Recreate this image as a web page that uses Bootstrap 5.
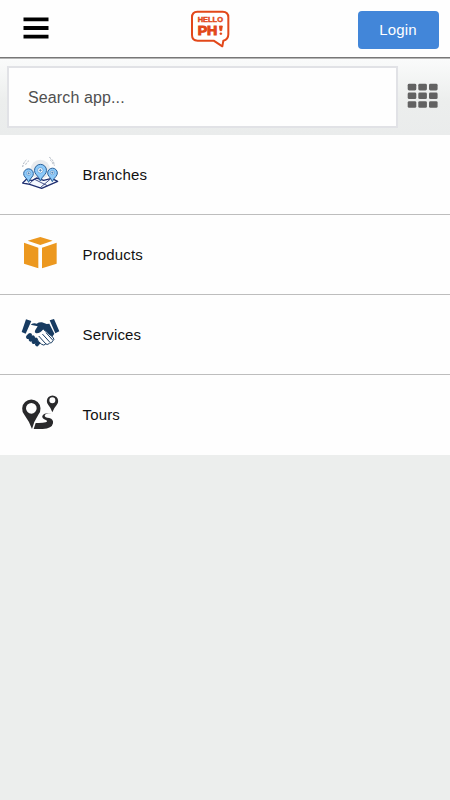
<!DOCTYPE html>
<html lang="en">
<head>
<meta charset="utf-8">
<meta name="viewport" content="width=device-width, initial-scale=1">
<title>Hello PH!</title>
<link href="https://cdn.jsdelivr.net/npm/bootstrap@5.3.0/dist/css/bootstrap.min.css" rel="stylesheet">
<style>
body{background:#eceeed;font-family:"Liberation Sans",Arial,sans-serif;font-size:15px;letter-spacing:.15px;color:#111}
.topbar{height:59px;background:#fefefe;border-bottom:1px solid #b5b5b5;box-shadow:inset 0 -1px #777}
.menu-btn{width:26px;height:22px;margin:17px 0 0 23px}
.logo{width:60px;height:58px;margin-left:131px}
.login-btn{width:81px;height:37.5px;margin:11px 0 0 117.5px;background:#4286d9;border-radius:4px;font-size:15px;line-height:37px;letter-spacing:.2px}
.search-row{height:76px;padding:7px 0 7px 7px;background:linear-gradient(#fafbfb,#eceeed 55%,#eaecec)}
.search-box{width:391px;height:62px;border:2px solid #e1e2e6;border-radius:0;padding:1px 19px 0;font-size:16px;letter-spacing:.12px;background:#fefefe;color:#444}
.search-box::placeholder{color:#505050;opacity:1}
.search-box:focus{box-shadow:none;border-color:#c5cad3}
.grid-btn{width:32px;height:26px;margin:17px 0 0 9px}
.app-row{height:80px;background:#fefefe;border-bottom:1px solid #bdbdbd;color:#111}
.app-row:last-child{border-bottom-color:transparent}
.app-row svg{width:60px;height:55px;margin:10px 12.5px 0 10px}
.app-row span{padding-top:2px}
</style>
<script src="https://cdn.jsdelivr.net/npm/bootstrap@5.3.0/dist/js/bootstrap.bundle.min.js"></script>
</head>
<body>
<header class="topbar d-flex align-items-start">
  <button class="menu-btn btn p-0 border-0 d-flex flex-shrink-0" aria-label="Menu">
    <svg width="26" height="22" viewBox="0 0 26 22"><path d="M.5 2.4h25M.5 11h25M.5 19.6h25" stroke="#000" stroke-width="3.8"/></svg>
  </button>
  <svg class="logo flex-shrink-0" viewBox="0 0 180 174" role="img">
    <path d="M52 35h76q17 0 17 17v51q0 16-15 19l-3 17-26-17H53q-17 0-17-17V52q0-17 16-17z" fill="#fff" stroke="#e2481a" stroke-width="6" stroke-linejoin="round"/>
    <g fill="#e2481a" stroke="#e2481a" font-family="Liberation Sans,sans-serif" font-weight="700" letter-spacing="0">
      <text x="53" y="67" font-size="19" stroke-width="1.2" textLength="76" lengthAdjust="spacingAndGlyphs">HELLO</text>
      <text x="53" y="104" font-size="38" stroke-width="3" textLength="59" lengthAdjust="spacingAndGlyphs">PH</text>
      <path d="M118 78h9l-2 14h-5z M120 99h5v4h-5z" stroke-width="2.500"/>
    </g>
  </svg>
  <a href="#" class="login-btn btn p-0 border-0 text-white flex-shrink-0">Login</a>
</header>
<main>
  <div class="search-row d-flex align-items-start">
    <input class="search-box form-control flex-shrink-0" type="text" placeholder="Search app..." aria-label="Search app">
    <button class="grid-btn btn p-0 border-0 d-flex flex-shrink-0" aria-label="Grid view">
      <svg width="32" height="26" viewBox="0 0 32 26" fill="#626262">
        <rect x=".7" y=".8" width="8.6" height="6.6" rx="1.4"/><rect x="11.3" y=".8" width="8.6" height="6.6" rx="1.4"/><rect x="22" y=".8" width="8.6" height="6.6" rx="1.4"/>
        <rect x=".7" y="9.5" width="8.6" height="6.6" rx="1.4"/><rect x="11.3" y="9.5" width="8.6" height="6.6" rx="1.4"/><rect x="22" y="9.5" width="8.6" height="6.6" rx="1.4"/>
        <rect x=".7" y="18.2" width="8.6" height="6.6" rx="1.4"/><rect x="11.3" y="18.2" width="8.6" height="6.6" rx="1.4"/><rect x="22" y="18.2" width="8.6" height="6.6" rx="1.4"/>
      </svg>
    </button>
  </div>
  <nav>
    <a href="#" class="app-row d-flex text-decoration-none">
      <svg viewBox="0 0 180 165">
        <circle cx="91" cy="73" r="29" fill="#e9ebee"/>
        <path d="M38 66q2-14 12-22M47 59q3-7 11-13M118 37q14 9 15 25M121 45q7 6 9 15" fill="none" stroke="#9aa3b1" stroke-width="2.500" stroke-dasharray="6 3"/>
        <path d="M50 102L38 114l21 4 36 12 48-21-18-9-24 6-21-7-14 8z" fill="#f4f8fe" stroke="#202f70" stroke-width="4" stroke-linejoin="round"/>
        <path d="M58 117l14-15 40 20M91 128l29-25" fill="none" stroke="#202f70" stroke-width="2.500"/>
        <g fill="#8dcafa" stroke="#2b6199" stroke-width="3">
          <path d="M56 112q-4-9-11-16a14.500 14.500 0 1 1 21 0q-7 7-10 16z"/>
          <path d="M127 110q-4-9-10-16a14.500 14.500 0 1 1 21 0q-7 7-11 16z"/>
          <path d="M91 108q-4-11-12-19a18 18 0 1 1 25 0q-9 9-13 19z"/>
        </g>
        <g fill="#fff" stroke="#3c7bb5" stroke-width="1.500"><circle cx="56" cy="85" r="6"/><circle cx="127" cy="83" r="6"/><circle cx="91" cy="76" r="8"/></g>
        <path d="M56 81.500v7M52.500 85h7M127 79.500v7M123.500 83h7M91 71.500v9M86.500 76h9" stroke="#397bb9" stroke-width="2.500"/>
      </svg>
      <span class="align-self-center">Branches</span>
    </a>
    <a href="#" class="app-row d-flex text-decoration-none">
      <svg viewBox="0 0 180 165" fill="#ec981f"><path d="M91 36l37 11-37 13-38-13zM42 53l43 15v62l-43-14zM140 53v63l-44 14V68z"/></svg>
      <span class="align-self-center">Products</span>
    </a>
    <a href="#" class="app-row d-flex text-decoration-none">
      <svg viewBox="0 0 180 165">
        <g fill="#173b61">
          <path d="M48 43l16 5-17 38-12-5zM119 46l13-4 16 37-12 6z"/>
          <path d="M62 59q9-6 18-3 7-5 16-4l14 5 8-1 15 30-6 9-27-22q-10 13-21 12-7-2-3-10l7-11z"/>
        </g>
        <path d="M54 96l6-6M62 104l7-7M71 111l7-7M81 118l5-6" stroke="#173b61" stroke-width="12" stroke-linecap="round"/>
        <path d="M100 73l29 24q6 7-1 11-2 7-9 6-5 7-12 3-5 6-12 1l-10-9" fill="#fff" stroke="#173b61" stroke-width="3" stroke-linejoin="round"/>
        <path d="M87 94l20 22M98 88l20 22M109 84l18 20" fill="none" stroke="#173b61" stroke-width="3" stroke-linecap="round"/>
      </svg>
      <span class="align-self-center">Services</span>
    </a>
    <a href="#" class="app-row d-flex text-decoration-none">
      <svg viewBox="0 0 180 165" fill="#29292b">
        <path fill-rule="evenodd" d="M66 132Q58 109 43 89A27.500 27.500 0 1 1 85 89Q72 108 66 132zM64 54a16 16 0 1 0 0 32 16 16 0 1 0 0-32z"/>
        <path fill-rule="evenodd" d="M127 82Q123 69 115 60a17 17 0 1 1 25 0Q131 70 127 82zM127 37a9 9 0 1 0 0 18 9 9 0 1 0 0-18z"/>
        <path d="M125 84q-20 0-21 8 0 5 14 7 13 4 11 16-3 16-31 17H71l6-18q20 1 30-2 9-4-1-8-11-4-9-11 3-10 28-9z"/>
      </svg>
      <span class="align-self-center">Tours</span>
    </a>
  </nav>
</main>
</body>
</html>
